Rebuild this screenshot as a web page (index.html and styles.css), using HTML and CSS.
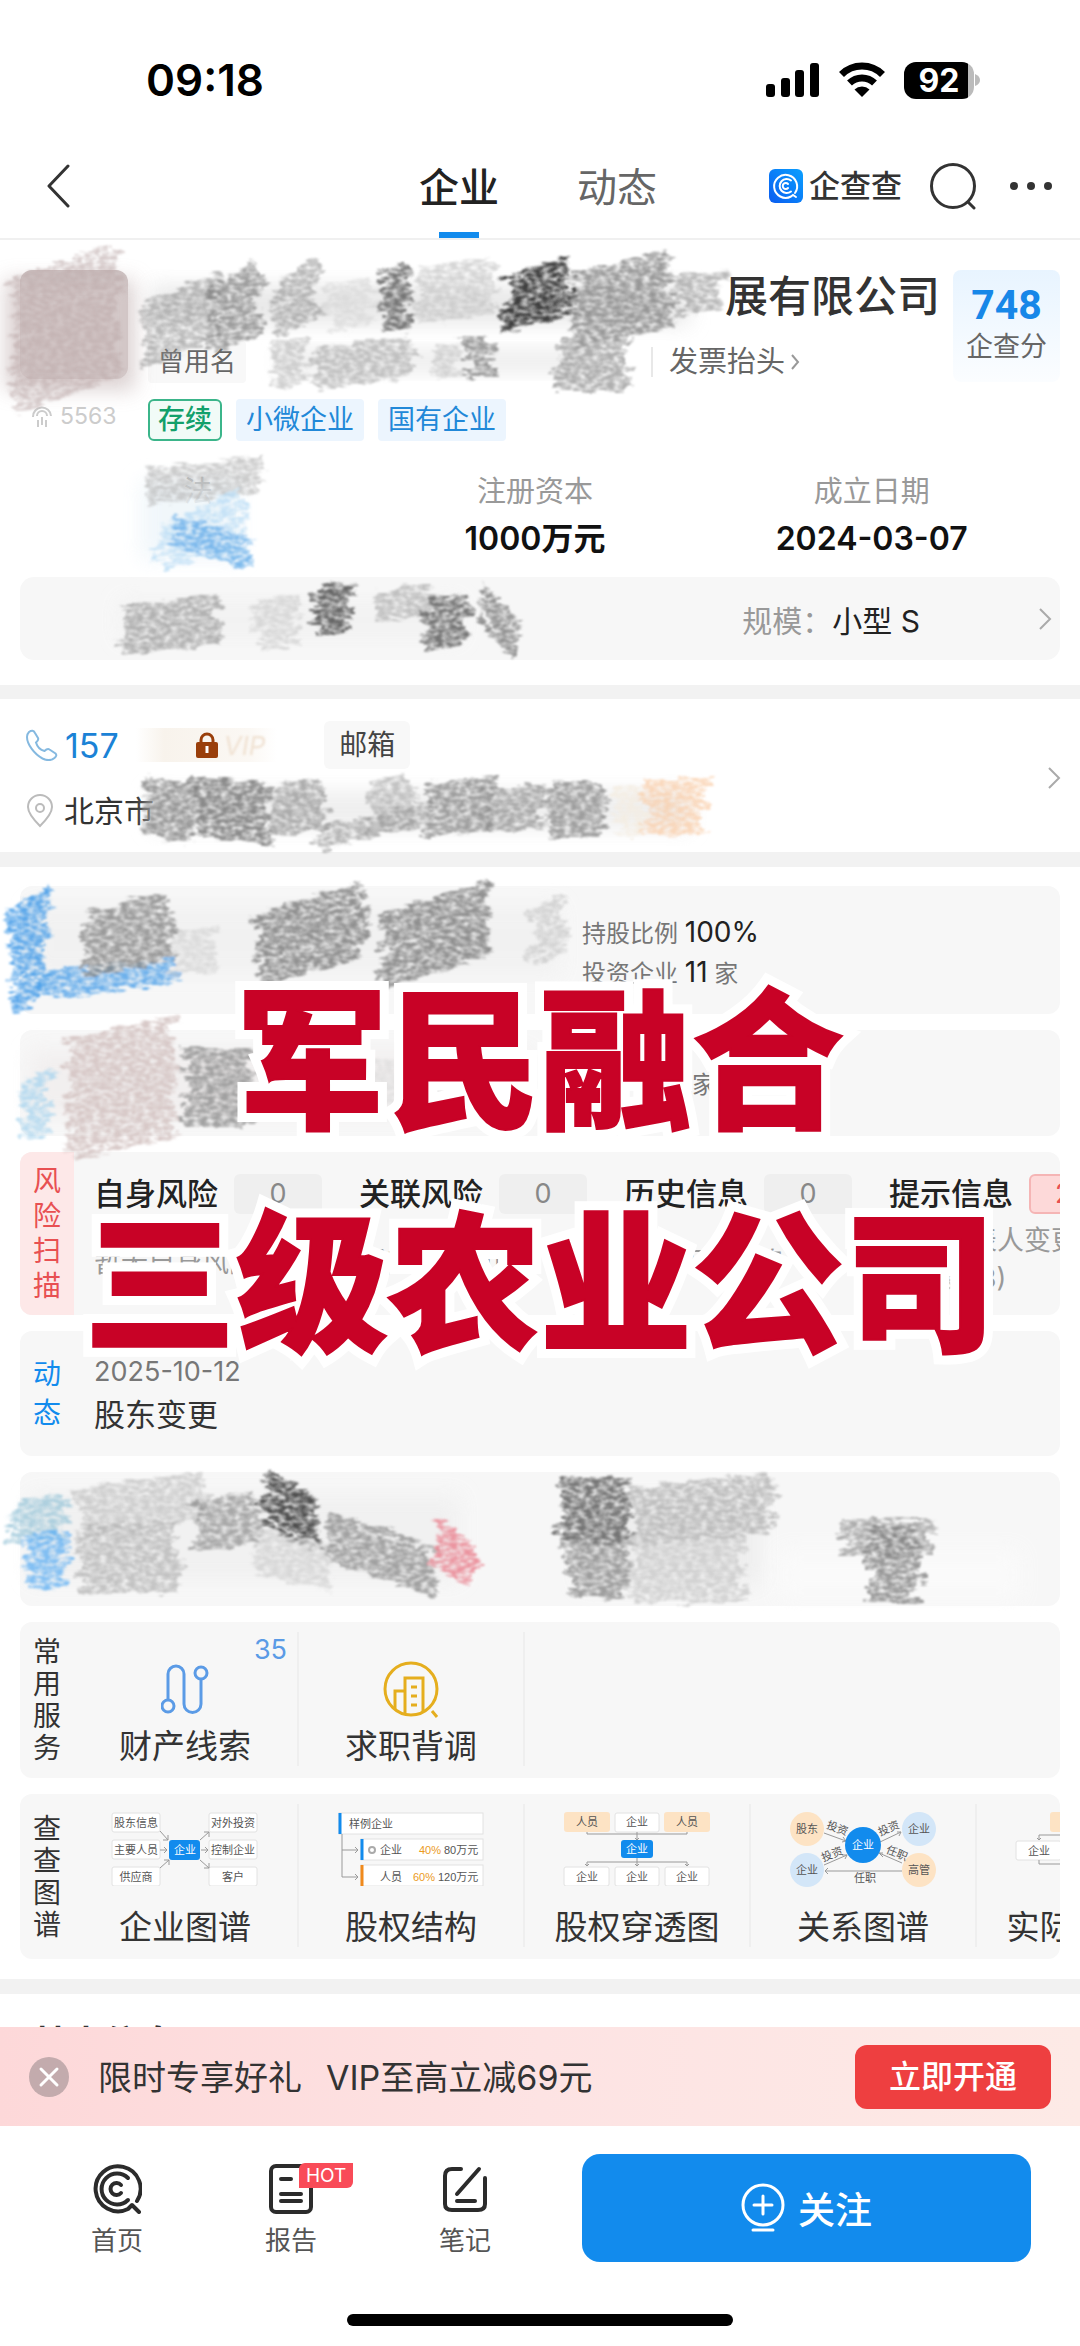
FILE: index.html
```html
<!DOCTYPE html>
<html lang="zh-CN">
<head>
    <meta charset="UTF-8">
    <meta name="viewport" content="width=device-width, initial-scale=1.0">
    <title>企查查</title>
    <link rel="stylesheet" href="styles.css">
</head>
<body>
<div class="app">
    <div class="status-bar">
        <span class="clock">09:18</span>
        <div class="status-icons">
            <svg width="54" height="36" viewBox="0 0 54 36">
                <rect x="0" y="22" width="9" height="13" rx="3"/>
                <rect x="15" y="16" width="9" height="19" rx="3"/>
                <rect x="29" y="8" width="9" height="27" rx="3"/>
                <rect x="44" y="1" width="9" height="34" rx="3"/>
            </svg>
            <svg width="48" height="36" viewBox="0 0 48 36">
                <path d="M3.500 12.500a29 29 0 0 1 41 0M11.500 21a18 18 0 0 1 25 0" fill="none" stroke="#000" stroke-width="7"/>
                <path d="M24 35l-7.500-7.500a11 11 0 0 1 15 0z"/>
            </svg>
            <div class="battery">
                <span class="battery-level">92</span>
                <svg width="6" height="12" viewBox="0 0 6 12"><path d="M1 0q5 2 5 6t-5 6z" fill="#bbb"/></svg>
            </div>
        </div>
    </div>

    <nav class="nav">
        <button class="icon-btn" aria-label="返回">
            <svg width="24" height="44" viewBox="0 0 24 44"><path d="M22 2L3 22l19 20" fill="none" stroke="#333" stroke-width="3" stroke-linecap="round" stroke-linejoin="round"/></svg>
        </button>
        <div class="nav-tabs">
            <a href="#" class="nav-tab active">企业</a>
            <a href="#" class="nav-tab">动态</a>
        </div>
        <div class="nav-right">
            <a href="#" class="brand">
                <svg width="34" height="34" viewBox="0 0 34 34">
                    <defs><linearGradient id="logo" x1="0" y1="1" x2="1" y2="0"><stop offset="0" stop-color="#0a5cf0"/><stop offset="1" stop-color="#0aa0ff"/></linearGradient></defs>
                    <rect width="34" height="34" rx="6" fill="url(#logo)"/>
                    <g fill="none" stroke="#fff" stroke-width="2" stroke-linecap="round">
                        <path d="M26 24a11.500 11.500 0 1 0-4 3.500l2-1.500 3 2"/>
                        <path d="M22 11.500a7 7 0 1 0 0 11"/>
                        <path d="M19 15a3 3 0 1 0 0 4"/>
                    </g>
                </svg>
                <span>企查查</span>
            </a>
            <button class="icon-btn search" aria-label="搜索">
                <svg width="46" height="48" viewBox="0 0 46 48" fill="none" stroke="#333" stroke-width="3" stroke-linecap="round"><circle cx="23" cy="24" r="21.500"/><path d="M38 40l6 6"/></svg>
            </button>
            <button class="icon-btn" aria-label="更多">
                <svg width="42" height="8" viewBox="0 0 42 8" fill="#333"><circle cx="4" cy="4" r="4"/><circle cx="21" cy="4" r="4"/><circle cx="38" cy="4" r="4"/></svg>
            </button>
        </div>
    </nav>

    <main class="content">
        <section class="company">
            <div class="company-top">
                <div class="company-side">
                    <div class="avatar"></div>
                    <div class="hot-count">
                        <svg width="24" height="26" viewBox="0 0 24 26" fill="none" stroke="#ccc" stroke-width="2"><path d="M3 14a9 9 0 1 1 18-1M7 13a5 5 0 0 1 10 0M8 17v7M12 14v8M16 17v7"/></svg>
                        5563
                    </div>
                </div>
                <div class="company-main">
                    <h1>展有限公司</h1>
                    <div class="alias-row">
                        <span class="alias">曾用名</span>
                        <a href="#" class="invoice">发票抬头<svg width="9" height="16" viewBox="0 0 9 16"><path d="M1 1l6 7-6 7" fill="none" stroke="#999" stroke-width="2"/></svg></a>
                    </div>
                    <div class="tags">
                        <span class="tag tag-green">存续</span>
                        <span class="tag">小微企业</span>
                        <span class="tag">国有企业</span>
                    </div>
                </div>
                <a href="#" class="score"><b>748</b><span>企查分</span></a>
            </div>
            <dl class="stats">
                <div><dt>法</dt><dd></dd></div>
                <div><dt>注册资本</dt><dd>1000万元</dd></div>
                <div><dt>成立日期</dt><dd>2024-03-07</dd></div>
            </dl>
            <a href="#" class="scale-row">
                <span class="muted">规模：</span><span class="scale-value">小型 S</span>
                <svg width="14" height="24" viewBox="0 0 14 24"><path d="M2 2l10 10L2 22" fill="none" stroke="#aaa" stroke-width="2"/></svg>
            </a>
        </section>

        <section class="contact">
            <div class="contact-lines">
                <div class="phone-row">
                    <svg width="32" height="32" viewBox="0 0 32 32"><path d="M3 3q4-3 6 1l3 5q1 2-2 4.500 2 7 8.500 8.500 3-3 5-1.500l6 4q2 2-1 4.500-5 4-12 .5C8 25 1 15 1 8q0-3 2-5z" fill="none" stroke="#85b9e0" stroke-width="2"/></svg>
                    <a href="#" class="phone">157</a>
                    <span class="vip"><svg width="22" height="26" viewBox="0 0 22 26"><path d="M5 11V8a6 6 0 0 1 12 0v3" fill="none" stroke="#9a3f0b" stroke-width="3"/><rect y="10" width="22" height="16" rx="2" fill="#9a3f0b"/><path d="M11 14v7" stroke="#fff" stroke-width="3"/></svg><i>VIP</i></span>
                    <button class="mail">邮箱</button>
                </div>
                <div class="address-row">
                    <svg width="28" height="34" viewBox="0 0 28 34" fill="none" stroke="#bbb" stroke-width="2"><path d="M14 32C7 25 2 19 2 13a12 12 0 0 1 24 0c0 6-5 12-12 19z"/><circle cx="14" cy="14" r="4"/></svg>
                    北京市
                </div>
            </div>
            <svg width="14" height="24" viewBox="0 0 14 24"><path d="M2 2l10 10L2 22" fill="none" stroke="#aaa" stroke-width="2"/></svg>
        </section>

        <section class="cards">
            <div class="card holder">
                <p>持股比例 <b>100%</b></p>
                <p>投资企业 <b>11</b> 家</p>
            </div>
            <div class="card holder second"><p>家</p></div>

            <div class="card risk">
                <h2 class="card-label risk-label">风险扫描</h2>
                <div class="risk-list">
                    <div class="risk-item">
                        <h3>自身风险<span class="count">0</span></h3>
                        <p>暂无自身风险</p>
                    </div>
                    <div class="risk-item">
                        <h3>关联风险<span class="count">0</span></h3>
                        <p>暂无关联风险</p>
                    </div>
                    <div class="risk-item">
                        <h3>历史信息<span class="count">0</span></h3>
                        <p>暂无历史信息</p>
                    </div>
                    <div class="risk-item">
                        <h3>提示信息<span class="count count-red">2</span></h3>
                        <p class="two-line">法定代表人变更<br>等变更(3)</p>
                    </div>
                </div>
            </div>

            <div class="card news">
                <h2 class="card-label blue">动态</h2>
                <div class="news-body">
                    <time>2025-10-12</time>
                    <p>股东变更</p>
                </div>
            </div>

            <div class="card blank"></div>

            <div class="card services">
                <h2 class="card-label">常用服务</h2>
                <div class="tiles">
                    <a href="#" class="tile">
                        <span class="tile-badge">35</span>
                        <svg width="48" height="50" viewBox="0 0 48 50" fill="none" stroke="#5b9be6" stroke-width="3"><circle cx="7" cy="42" r="6"/><circle cx="40" cy="9" r="6"/><path d="M7 36V10a8 8 0 0 1 16 0v30a8 8 0 0 0 17 0V15"/></svg>
                        <span>财产线索</span>
                    </a>
                    <a href="#" class="tile">
                        <svg width="56" height="58" viewBox="0 0 56 58" fill="none" stroke="#e5ae1e" stroke-width="3"><circle cx="28" cy="29" r="26"/><path d="M22 53V18h18v34M22 31H12v18M49 51l5 6M28 27h6M28 36h6M28 45h6"/></svg>
                        <span>求职背调</span>
                    </a>
                </div>
            </div>

            <div class="card charts">
                <h2 class="card-label">查查图谱</h2>
                <div class="tiles">
                    <a href="#" class="tile">
                        <svg class="chart" width="148" height="74" viewBox="0 0 148 74">
                            <g class="box"><rect x="1" y="1" width="48" height="19" rx="2"/><rect x="1" y="28" width="48" height="19" rx="2"/><rect x="1" y="55" width="48" height="19" rx="2"/><rect x="98" y="1" width="48" height="19" rx="2"/><rect x="98" y="28" width="48" height="19" rx="2"/><rect x="98" y="55" width="48" height="19" rx="2"/></g>
                            <path class="line" d="M49 19l8 9m0-5v5h-5M49 38h7m-3-3l3 3-3 3M49 56l9-8m-5 0h5v5M89 28l9-8m-5 0h5v5M90 38h7m-3-3l3 3-3 3M89 48l9 8m0-5v5h-5"/>
                            <rect x="58" y="28" width="31" height="20" rx="3" fill="#128bed"/>
                            <g class="label"><text x="25" y="15">股东信息</text><text x="25" y="42">主要人员</text><text x="25" y="69">供应商</text><text x="122" y="15">对外投资</text><text x="122" y="42">控制企业</text><text x="122" y="69">客户</text><text x="74" y="42" class="on">企业</text></g>
                        </svg>
                        <span>企业图谱</span>
                    </a>
                    <a href="#" class="tile">
                        <svg class="chart" width="148" height="74" viewBox="0 0 148 74">
                            <g class="box"><rect x="2" y="1" width="144" height="21"/><rect x="24" y="27" width="122" height="21"/><rect x="24" y="53" width="122" height="21"/></g>
                            <path class="line" d="M5 22v43h16m-3-3l3 3-3 3M5 38h16m-3-3l3 3-3 3"/>
                            <path d="M3 1v21M25 27v21" stroke="#128bed" stroke-width="3"/><path d="M25 53v21" stroke="#f08a1c" stroke-width="3"/>
                            <circle cx="35" cy="38" r="3" fill="none" stroke="#aaa" stroke-width="2"/>
                            <g class="label start"><text x="12" y="16">样例企业</text><text x="43" y="42">企业</text><text x="43" y="69">人员</text><text x="82" y="42" class="gold">40%</text><text x="76" y="69" class="gold">60%</text><text x="107" y="42">80万元</text><text x="101" y="69">120万元</text></g>
                        </svg>
                        <span>股权结构</span>
                    </a>
                    <a href="#" class="tile">
                        <svg class="chart" width="148" height="74" viewBox="0 0 148 74">
                            <g fill="#fde3c4"><rect x="1" y="0" width="46" height="20" rx="3"/><rect x="101" y="0" width="46" height="20" rx="3"/></g>
                            <g class="box"><rect x="52" y="1" width="44" height="19" rx="2"/><rect x="1" y="55" width="45" height="19" rx="2"/><rect x="52" y="55" width="44" height="19" rx="2"/><rect x="102" y="55" width="44" height="19" rx="2"/></g>
                            <path class="line" d="M24 20v2h100v-2M74 20v8m-2-2l2 2 2-2M74 46v8m-2-2l2 2 2-2M24 54v-4h100v4m-102-2l2 2 2-2m96 0l2 2 2-2"/>
                            <rect x="58" y="28" width="32" height="18" rx="3" fill="#128bed"/>
                            <g class="label"><text x="24" y="14">人员</text><text x="74" y="14">企业</text><text x="124" y="14">人员</text><text x="74" y="41" class="on">企业</text><text x="24" y="69">企业</text><text x="74" y="69">企业</text><text x="124" y="69">企业</text></g>
                        </svg>
                        <span>股权穿透图</span>
                    </a>
                    <a href="#" class="tile">
                        <svg class="chart" width="148" height="76" viewBox="0 0 148 76">
                            <g fill="#fde3c4"><circle cx="18" cy="17" r="17"/><circle cx="130" cy="58" r="17"/></g>
                            <g fill="#d3e6f8"><circle cx="18" cy="58" r="17"/><circle cx="130" cy="17" r="17"/></g>
                            <path class="line" d="M35 21l22 8m-3-4l3 4-4 1M35 53l23-10m-5 0l5 0-2 4M91 30l21-10m-4 0l4 0-2 4M113 51L90 41m4 4l-4-4h4M113 59H36m3-3l-3 3 3 3"/>
                            <circle cx="74" cy="33" r="18" fill="#128bed"/>
                            <g class="label"><text x="18" y="21">股东</text><text x="130" y="21">企业</text><text x="18" y="62">企业</text><text x="130" y="62">高管</text><text x="74" y="37" class="on">企业</text><text x="76" y="70">任职</text>
                                <text x="48" y="20" transform="rotate(20 48 17)">投资</text><text x="100" y="20" transform="rotate(-22 100 17)">投资</text><text x="43" y="46" transform="rotate(-22 43 42)">投资</text><text x="108" y="45" transform="rotate(22 108 41)">任职</text></g>
                        </svg>
                        <span>关系图谱</span>
                    </a>
                    <a href="#" class="tile">
                        <svg class="chart" width="148" height="74" viewBox="0 0 148 74">
                            <rect x="35" y="0" width="46" height="20" rx="3" fill="#fde3c4"/>
                            <g class="box"><rect x="1" y="29" width="45" height="19" rx="2"/></g>
                            <path class="line" d="M24 28v-5h50M24 48v4h50m-52-26l2 2 2-2"/>
                            <g class="label"><text x="24" y="43">企业</text></g>
                        </svg>
                        <span>实际控制人</span>
                    </a>
                </div>
            </div>
        </section>

        <section class="basic"><h2>基本信息</h2></section>
    </main>

    <footer class="footer">
        <div class="promo">
            <button class="icon-btn" aria-label="关闭">
                <svg width="40" height="40" viewBox="0 0 40 40"><circle cx="20" cy="20" r="20" fill="#c3abad"/><path d="M12 12l16 16M28 12L12 28" stroke="#fff" stroke-width="3" stroke-linecap="round"/></svg>
            </button>
            <p><span>限时专享好礼</span><span>VIP至高立减69元</span></p>
            <button class="promo-btn">立即开通</button>
        </div>
        <div class="tab-bar">
            <a href="#" class="tab-item">
                <svg width="50" height="50" viewBox="0 0 50 50" fill="none" stroke="#2b2b2b" stroke-width="4" stroke-linecap="round" stroke-linejoin="round">
                    <path d="M45 37A22.500 22.500 0 1 0 36 45l4-4 7 7"/><path d="M36 14a15.500 15.500 0 1 0 0 22"/><path d="M29 21a6 6 0 1 0 0 8"/>
                </svg>
                <span>首页</span>
            </a>
            <a href="#" class="tab-item">
                <svg width="50" height="50" viewBox="0 0 50 50" fill="none" stroke="#2b2b2b" stroke-width="4" stroke-linecap="round"><rect x="5" y="2" width="40" height="46" rx="5"/><path d="M15 15h10M15 30h20M15 37h20"/></svg>
                <span>报告</span>
                <em class="hot">HOT</em>
            </a>
            <a href="#" class="tab-item">
                <svg width="50" height="50" viewBox="0 0 50 50" fill="none" stroke="#2b2b2b" stroke-width="4" stroke-linecap="round"><path d="M21 5h-9q-7 0-7 7v28q0 6 7 6h26q7 0 7-6V14M39 5L17 30M17 37h18"/></svg>
                <span>笔记</span>
            </a>
            <button class="follow">
                <svg width="44" height="50" viewBox="0 0 44 50" fill="none" stroke="#fff" stroke-width="3" stroke-linecap="round"><circle cx="22" cy="22" r="20"/><path d="M22 13v18M13 22h18M12 47h20"/></svg>
                关注
            </button>
        </div>
        <div class="home-indicator"></div>
    </footer>

    <svg class="smudges" id="smudges" viewBox="0 0 1080 2346" aria-hidden="true">
        <defs>
            <filter id="soft" x="-20%" y="-40%" width="140%" height="180%"><feGaussianBlur stdDeviation="10"/></filter>
            <filter id="chalk" filterUnits="userSpaceOnUse" x="0" y="200" width="1080" height="1460">
                <feTurbulence type="fractalNoise" baseFrequency="0.05 0.2" numOctaves="2" seed="4" result="edge"/>
                <feDisplacementMap in="SourceGraphic" in2="edge" scale="14" xChannelSelector="R" yChannelSelector="G" result="d"/>
                <feTurbulence type="fractalNoise" baseFrequency="0.14 0.3" numOctaves="3" seed="9" result="grain"/>
                <feColorMatrix in="grain" type="matrix" values="0 0 0 0 0  0 0 0 0 0  0 0 0 0 0  0 0 0 2.2 -0.4" result="a"/>
                <feComposite in="d" in2="a" operator="in"/>
                <feGaussianBlur stdDeviation="0.8"/>
            </filter>
        </defs>
    </svg>

    <div class="caption">
        <span data-text="军民融合">军民融合</span>
        <span data-text="三级农业公司">三级农业公司</span>
    </div>
</div>
<script src="smudges.js"></script>
</body>
</html>
```

FILE: smudges.js
```js
const NS = 'http://www.w3.org/2000/svg';
const svg = document.getElementById('smudges');

// pale areas: x, y, w, h, color
const washes = [
    [5, 280, 130, 110, '#d6caca'],
    [150, 285, 540, 40, '#e6e6e6'],
    [280, 350, 330, 22, '#e9e9e9'],
    [140, 480, 100, 80, '#eff6fa'],
    [120, 600, 340, 40, '#f2f2f2'],
    [150, 790, 540, 40, '#ededed'],
    [30, 905, 530, 70, '#f1f1f1'],
    [30, 1050, 500, 65, '#f1eeee'],
    [30, 1495, 430, 85, '#f0f0f0'],
    [580, 1500, 180, 85, '#ededed'],
    [780, 1550, 240, 50, '#fbfbfb']
];

// pencil strokes: x, y, w, h, slope, color, opacity
const strokes = [
    [5, 265, 120, 130, 0.3, '#baa8a9', 0.6],
    [135, 290, 90, 60, 0.35, '#8c8c8c', 0.6],
    [205, 275, 62, 65, 0.35, '#777', 0.7],
    [270, 270, 56, 55, 0.35, '#8a8a8a', 0.6],
    [320, 285, 60, 40, 0.2, '#ccc', 0.5],
    [375, 268, 42, 60, 0.2, '#555', 0.8],
    [410, 265, 90, 50, 0.1, '#bbb', 0.6],
    [498, 270, 80, 50, 0.25, '#333', 0.95],
    [568, 265, 110, 70, 0.2, '#808080', 0.8],
    [670, 275, 60, 38, 0.1, '#999', 0.7],
    [265, 342, 50, 42, 0.1, '#bbb', 0.7],
    [305, 345, 115, 38, 0.1, '#aaa', 0.7],
    [425, 345, 40, 34, 0.1, '#bbb', 0.6],
    [460, 340, 38, 36, 0, '#808080', 0.8],
    [550, 338, 85, 50, 0, '#999', 0.8],
    [135, 465, 130, 34, 0.1, '#b5b5b5', 0.7],
    [150, 510, 100, 40, 0.4, '#b9dcf5', 0.8],
    [170, 530, 85, 26, -0.3, '#6fb1ea', 0.9],
    [115, 602, 112, 48, 0.1, '#a0a0a0', 0.8],
    [250, 600, 52, 46, 0.1, '#ccc', 0.7],
    [308, 586, 50, 46, 0.1, '#555', 0.9],
    [365, 590, 76, 28, 0.1, '#aaa', 0.7],
    [418, 600, 56, 48, 0.1, '#666', 0.9],
    [475, 605, 48, 36, -0.8, '#777', 0.8],
    [140, 785, 60, 54, -0.2, '#808080', 0.8],
    [185, 782, 90, 56, -0.1, '#777', 0.85],
    [262, 785, 70, 46, 0.1, '#999', 0.8],
    [360, 780, 60, 50, 0.1, '#aaa', 0.7],
    [310, 818, 130, 18, 0.2, '#999', 0.7],
    [422, 782, 80, 50, 0.1, '#888', 0.8],
    [478, 788, 70, 44, 0, '#888', 0.7],
    [540, 785, 70, 52, 0, '#888', 0.8],
    [610, 788, 40, 46, 0, '#f4ece0', 0.8],
    [636, 782, 74, 54, 0, '#f9c9a0', 0.7],
    [4, 900, 50, 100, 0.5, '#4b9fe8', 0.9],
    [30, 968, 150, 24, 0.1, '#4b9fe8', 0.8],
    [80, 905, 100, 60, 0.2, '#858585', 0.8],
    [170, 930, 50, 40, 0.1, '#ccc', 0.6],
    [252, 900, 118, 70, 0.25, '#777', 0.8],
    [376, 900, 120, 74, 0.3, '#777', 0.8],
    [525, 905, 45, 50, 0.4, '#c4c4c4', 0.7],
    [62, 1030, 118, 118, 0.2, '#d4c3c2', 0.9],
    [14, 1075, 42, 60, 0.3, '#a9d4ee', 0.8],
    [178, 1050, 80, 76, 0, '#8c8c8c', 0.8],
    [250, 1060, 300, 50, 0, '#d4d4d4', 0.5],
    [6, 1500, 66, 40, 0.1, '#9cc7da', 0.8],
    [20, 1535, 54, 50, 0.1, '#62b0f2', 0.8],
    [72, 1482, 140, 45, 0.1, '#b5b5b5', 0.6],
    [75, 1525, 110, 68, 0, '#b5b5b5', 0.8],
    [185, 1500, 80, 45, 0.1, '#888', 0.7],
    [258, 1485, 66, 50, -0.4, '#444', 0.95],
    [250, 1540, 90, 40, -0.2, '#ccc', 0.7],
    [320, 1532, 120, 48, -0.3, '#8c8c8c', 0.8],
    [430, 1532, 54, 42, -0.5, '#ea8a96', 0.9],
    [552, 1480, 85, 64, 0, '#666', 0.9],
    [560, 1545, 75, 50, 0, '#888', 0.8],
    [625, 1483, 155, 55, 0.1, '#a8a8a8', 0.7],
    [625, 1540, 125, 60, 0, '#c4c4c4', 0.7],
    [836, 1522, 104, 34, 0, '#8c8c8c', 0.7],
    [862, 1530, 64, 72, 0, '#808080', 0.8]
];

// fixed seed so the edges look the same on every load
let seed = 7;
function rand() {
    seed = (seed * 16807) % 2147483647;
    return seed / 2147483647;
}

function add(parent, name, attrs) {
    const el = document.createElementNS(NS, name);
    for (const key in attrs) el.setAttribute(key, attrs[key]);
    parent.appendChild(el);
    return el;
}

washes.forEach(([x, y, width, height, fill]) => {
    add(svg, 'rect', { x, y, width, height, fill, filter: 'url(#soft)', opacity: 0.85 });
});

const layer = add(svg, 'g', { filter: 'url(#chalk)' });
strokes.forEach(([x, y, w, h, slope, stroke, opacity]) => {
    let d = '';
    for (let t = 0; t <= h; t += 5) {
        const dy = slope * w / 2;
        const l = Math.round(x + rand() * 14);
        const r = Math.round(x + w - rand() * 14);
        d += `M${l} ${Math.round(y + t + dy)}L${r} ${Math.round(y + t - dy)}`;
    }
    add(layer, 'path', { d, stroke, opacity, 'stroke-width': 6, fill: 'none' });
});
```

FILE: styles.css
```css
:root {
    --blue: #128bed;
    --red: #ee3f40;
    --text: #333;
    --gray: #999;
    --card: #f7f7f7;
    --band: #f2f2f2;
}

* {
    box-sizing: border-box;
}

body, h1, h2, h3, p, dl, dd {
    margin: 0;
}

body {
    font-family: Inter, "Noto Sans CJK SC", sans-serif;
    color: var(--text);
    background: #fff;
}

a {
    color: inherit;
    text-decoration: none;
}

button {
    border: none;
    padding: 0;
    background: none;
    font-family: inherit;
    color: inherit;
}

svg {
    display: block;
    flex: none;
}

.app {
    position: relative;
    display: flex;
    flex-direction: column;
    height: 100vh;
    overflow: hidden;
}

/* top bars */
.status-bar {
    display: flex;
    flex: none;
    align-items: center;
    justify-content: space-between;
    height: 132px;
    padding: 28px 100px 0 146px;
}

.clock {
    font-size: 44px;
    font-weight: 600;
    color: #000;
}

.status-icons {
    display: flex;
    align-items: center;
    gap: 18px;
}

.battery {
    display: flex;
    align-items: center;
}

.battery-level {
    width: 70px;
    border-radius: 12px;
    background: linear-gradient(90deg, #000 64px, #bbb 64px);
    color: #fff;
    font-size: 32px;
    font-weight: 700;
    line-height: 37px;
    text-align: center;
}

.nav {
    display: grid;
    flex: none;
    grid-template-columns: 1fr auto 1fr;
    align-items: center;
    height: 108px;
    padding: 2px 28px 0 46px;
    border-bottom: 2px solid #f0f0f0;
}

.nav-tabs {
    display: flex;
    gap: 78px;
    height: 104px;
    margin-right: 22px;
}

.nav-tab {
    position: relative;
    font-size: 40px;
    line-height: 108px;
    color: #666;
}

.nav-tab.active {
    font-weight: 500;
    color: #222;
}

.nav-tab.active::after {
    content: '';
    position: absolute;
    left: 50%;
    bottom: 0;
    width: 40px;
    height: 6px;
    margin-left: -20px;
    background: var(--blue);
}

.nav-right {
    display: flex;
    align-items: center;
    justify-content: flex-end;
    gap: 28px;
}

.search {
    margin-right: 6px;
}

.brand {
    display: flex;
    align-items: center;
    gap: 6px;
    font-size: 31px;
    font-weight: 500;
    line-height: 40px;
}

.content {
    flex: 1;
    min-height: 0;
    overflow: hidden;
}

/* company header */
.company {
    padding: 30px 20px 25px;
    border-bottom: 14px solid var(--band);
}

.company-top {
    display: flex;
}

.company-side {
    width: 108px;
    margin-right: 20px;
}

.avatar {
    height: 109px;
    border-radius: 12px;
    background: #cbbfbf;
}

.hot-count {
    display: flex;
    align-items: center;
    gap: 6px;
    margin-top: 22px;
    padding-left: 10px;
    font-size: 23px;
    line-height: 30px;
    color: #ccc;
}

.company-main {
    flex: 1;
}

.company-main h1 {
    font-size: 43px;
    font-weight: 500;
    line-height: 52px;
    text-align: right;
}

.alias-row {
    display: flex;
    align-items: center;
    justify-content: space-between;
    margin-top: 19px;
    padding-right: 140px;
}

.alias {
    padding: 0 10px;
    border-radius: 4px;
    background: #f8f8f8;
    font-size: 26px;
    line-height: 42px;
    color: #666;
}

.invoice {
    display: flex;
    align-items: center;
    gap: 6px;
    padding-left: 16px;
    border-left: 2px solid #e8e8e8;
    font-size: 29px;
    line-height: 30px;
    color: #666;
}

.tags {
    display: flex;
    gap: 14px;
    margin-top: 16px;
}

.tag {
    padding: 0 10px;
    border-radius: 4px;
    background: #ecf5fe;
    font-size: 27px;
    line-height: 42px;
    color: #2188d8;
}

.tag-green {
    padding: 0 8px;
    border: 2px solid #3bb58a;
    border-radius: 6px;
    background: #f1fbf7;
    font-weight: 500;
    line-height: 38px;
    color: #12a06b;
}

.score {
    display: flex;
    flex-direction: column;
    align-items: center;
    width: 107px;
    height: 112px;
    margin-left: 13px;
    padding-top: 12px;
    border-radius: 8px;
    background: linear-gradient(#e8f4ff, #fbfdff);
}

.score b {
    font-family: Roboto, sans-serif;
    font-size: 41px;
    line-height: 46px;
    color: #1787e8;
}

.score span {
    font-size: 27px;
    line-height: 38px;
    color: #666;
}

.stats {
    display: grid;
    grid-template-columns: repeat(3, 1fr);
    margin-top: 33px;
    padding: 0 20px 0 10px;
    text-align: center;
}

.stats dt {
    font-size: 29px;
    line-height: 36px;
    color: var(--gray);
}

.stats dd {
    margin-top: 6px;
    font-size: 32px;
    font-weight: 600;
    line-height: 46px;
    color: #111;
}

.scale-row {
    display: flex;
    align-items: center;
    justify-content: flex-end;
    height: 83px;
    margin-top: 15px;
    padding-right: 8px;
    border-radius: 14px;
    background: var(--card);
    font-size: 30px;
}

.scale-value {
    margin-right: 118px;
    color: #222;
}

.muted {
    color: var(--gray);
}

/* contact */
.contact {
    display: flex;
    align-items: center;
    justify-content: space-between;
    padding: 22px 19px 18px 26px;
    border-bottom: 15px solid var(--band);
}

.phone-row {
    display: flex;
    align-items: center;
    height: 48px;
    gap: 7px;
}

.phone {
    font-size: 34px;
    color: #1b82d6;
}

.vip {
    display: flex;
    align-items: center;
    gap: 6px;
    height: 34px;
    margin-left: 10px;
    margin-right: 40px;
    padding: 0 12px 0 60px;
    background: linear-gradient(90deg, #fff, #f8f3ec 20%, #fbf8f4 80%, #fff);
    font-size: 26px;
    color: #f0e2d3;
}

.vip i {
    filter: blur(1px);
}

.mail {
    padding: 0 15px;
    border-radius: 6px;
    background: #f8f8f8;
    font-size: 28px;
    line-height: 48px;
    color: #444;
}

.address-row {
    display: flex;
    align-items: center;
    gap: 10px;
    margin-top: 19px;
    font-size: 30px;
    line-height: 46px;
}

/* cards */
.cards {
    display: flex;
    flex-direction: column;
    gap: 16px;
    padding: 19px 20px 20px;
    border-bottom: 15px solid var(--band);
}

.card {
    display: flex;
    border-radius: 12px;
    background: var(--card);
    overflow: hidden;
}

.card-label {
    display: flex;
    align-items: center;
    flex: none;
    width: 54px;
    padding: 0 13px;
    font-size: 28px;
    font-weight: 400;
    line-height: 32px;
    word-break: break-all;
}

.holder {
    flex-direction: column;
    height: 128px;
    padding: 27px 0 0 562px;
    font-size: 24px;
    line-height: 38px;
    color: #777;
}

.holder b {
    font-size: 28px;
    font-weight: 400;
    color: #222;
}

.holder.second {
    height: 106px;
    padding: 36px 0 0 672px;
}

.risk {
    height: 163px;
}

.risk-label {
    line-height: 35px;
    background: #fde8e8;
    color: #e85052;
}

.risk-list {
    display: flex;
    padding-top: 22px;
}

.risk-item {
    flex: none;
    width: 265px;
    padding-left: 20px;
}

.risk-item h3 {
    display: flex;
    align-items: center;
    gap: 16px;
    font-size: 31px;
    font-weight: 500;
    line-height: 40px;
    color: #222;
}

.count {
    width: 88px;
    border-radius: 6px;
    background: #efefef;
    font-size: 27px;
    font-weight: 400;
    text-align: center;
    color: #888;
}

.count-red {
    border: 2px solid #f5b5b5;
    background: #fdd9d9;
    line-height: 36px;
    padding-left: 24px;
    text-align: left;
    color: #e85052;
}

.risk-item p {
    margin-top: 30px;
    font-size: 27px;
    line-height: 38px;
    color: var(--gray);
}

.risk-item .two-line {
    margin-top: 8px;
    white-space: nowrap;
}

.news {
    height: 125px;
}

.news .card-label {
    line-height: 39px;
}

.blue {
    color: var(--blue);
}

.news-body {
    padding: 22px 20px;
}

.news-body time {
    display: block;
    font-size: 27px;
    line-height: 38px;
    color: #777;
}

.news-body p {
    font-size: 31px;
    line-height: 48px;
}

.blank {
    height: 134px;
}

.services {
    height: 156px;
}

.charts {
    height: 165px;
}

.tiles {
    display: flex;
    padding: 10px 0 12px;
}

.tile {
    position: relative;
    display: flex;
    flex: none;
    flex-direction: column;
    align-items: center;
    justify-content: space-between;
    width: 226px;
    padding-top: 32px;
    border-right: 2px solid #efefef;
    font-size: 33px;
    line-height: 40px;
}

.tile:first-child {
    margin-left: -1px;
}

.tile:nth-child(2) {
    padding-top: 28px;
}

.charts .tile {
    padding-top: 8px;
}

.tile-badge {
    position: absolute;
    top: 0;
    right: 10px;
    font-size: 27px;
    line-height: 36px;
    color: #5b9be6;
}

.box rect {
    fill: #fff;
    stroke: #e2e2e2;
}

.line {
    fill: none;
    stroke: #999;
}

.label {
    font-family: "Liberation Sans", "Noto Sans CJK SC", sans-serif;
    font-size: 11px;
    fill: #555;
    text-anchor: middle;
}

.label.start {
    text-anchor: start;
}

.label .on {
    fill: #fff;
}

.label .gold {
    fill: #eb9a1e;
}

.basic {
    padding: 30px 32px 0;
}

.basic h2 {
    font-size: 36px;
    font-weight: 700;
    line-height: 40px;
}

/* bottom */
.footer {
    flex: none;
    background: #fff;
}

.promo {
    display: flex;
    align-items: center;
    height: 99px;
    padding: 0 29px;
    background: linear-gradient(90deg, #fdd8d9, #fde3e3 50%, #fdeae6);
}

.promo p {
    display: flex;
    flex: 1;
    gap: 24px;
    padding-bottom: 2px;
    padding-left: 29px;
    font-size: 34px;
}

.promo-btn {
    padding: 0 34px;
    border-radius: 12px;
    background: var(--red);
    font-size: 32px;
    font-weight: 500;
    line-height: 64px;
    color: #fff;
}

.tab-bar {
    display: flex;
    padding: 28px 49px 0 30px;
}

.tab-item {
    position: relative;
    display: flex;
    flex-direction: column;
    align-items: center;
    width: 174px;
    padding-top: 10px;
    font-size: 26px;
    line-height: 36px;
    color: #555;
}

.tab-item span {
    margin-top: 9px;
}

.hot {
    position: absolute;
    top: 9px;
    left: 95px;
    padding: 0 7px;
    border-radius: 6px 0 6px 0;
    background: #f94b58;
    font-size: 19px;
    font-style: normal;
    line-height: 25px;
    color: #fff;
}

.follow {
    display: flex;
    flex: 1;
    align-items: center;
    justify-content: center;
    gap: 13px;
    height: 108px;
    margin-left: 30px;
    border-radius: 18px;
    background: var(--blue);
    font-size: 37px;
    font-weight: 500;
    color: #fff;
}

.home-indicator {
    width: 386px;
    height: 12px;
    margin: 52px auto 20px;
    border-radius: 6px;
    background: #000;
}

/* laid over the page */
.smudges {
    position: absolute;
    top: 0;
    left: 0;
    width: 100%;
    pointer-events: none;
}

.caption {
    position: absolute;
    top: 940px;
    left: 0;
    width: 100%;
    isolation: isolate;
    font-family: "Noto Sans CJK SC", sans-serif;
    font-size: 152px;
    font-weight: 900;
    line-height: 223px;
    text-align: center;
    color: #c80226;
    pointer-events: none;
}

.caption span {
    position: relative;
    display: block;
    -webkit-text-stroke: 2px #c80226;
}

.caption span::before {
    content: attr(data-text);
    position: absolute;
    left: 0;
    width: 100%;
    z-index: -1;
    -webkit-text-stroke: 20px #fff;
}
```
